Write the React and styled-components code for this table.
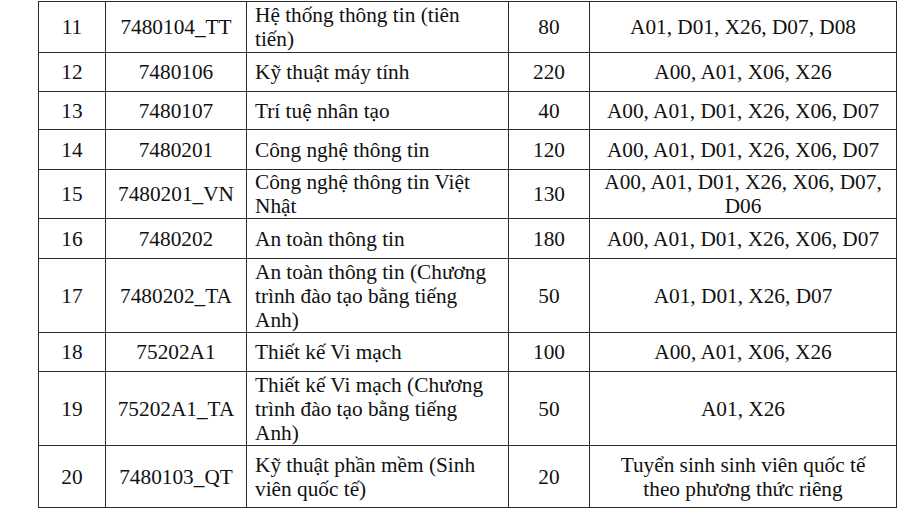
import React from 'react';
import styled, { createGlobalStyle } from 'styled-components';

const GlobalStyle = createGlobalStyle`
  html, body {
    margin: 0;
    padding: 0;
    background: #fff;
  }
`;

const Page = styled.div`
  padding: 1px 0 0 38px;
  background: #fff;
`;

const Table = styled.table`
  border-collapse: collapse;
  table-layout: fixed;
  width: 858px;
  font-family: 'Liberation Serif', 'Times New Roman', 'DejaVu Serif', serif;
  font-size: 21.3px;
  color: #111;
`;

const Col = styled.col`
  width: ${(p) => p.$w}px;
`;

const Row = styled.tr`
  height: ${(p) => p.$h}px;
`;

const Cell = styled.td`
  border: 1px solid #2b2b2b;
  padding: 0 8px;
  vertical-align: middle;
  text-align: ${(p) => (p.$left ? 'left' : 'center')};
  line-height: 24px;
  white-space: nowrap;
  overflow: hidden;
`;

const widths = [67, 141, 262, 81, 307];

const rows = [
  { no: 11, code: '7480104_TT', name: ['Hệ thống thông tin (tiên', 'tiến)'], qty: 80, combo: ['A01, D01, X26, D07, D08'], h: 51 },
  { no: 12, code: '7480106', name: ['Kỹ thuật máy tính'], qty: 220, combo: ['A00, A01, X06, X26'], h: 39 },
  { no: 13, code: '7480107', name: ['Trí tuệ nhân tạo'], qty: 40, combo: ['A00, A01, D01, X26, X06, D07'], h: 38 },
  { no: 14, code: '7480201', name: ['Công nghệ thông tin'], qty: 120, combo: ['A00, A01, D01, X26, X06, D07'], h: 40 },
  { no: 15, code: '7480201_VN', name: ['Công nghệ thông tin Việt', 'Nhật'], qty: 130, combo: ['A00, A01, D01, X26, X06, D07,', 'D06'], h: 49 },
  { no: 16, code: '7480202', name: ['An toàn thông tin'], qty: 180, combo: ['A00, A01, D01, X26, X06, D07'], h: 40 },
  { no: 17, code: '7480202_TA', name: ['An toàn thông tin (Chương', 'trình đào tạo bằng tiếng', 'Anh)'], qty: 50, combo: ['A01, D01, X26, D07'], h: 74 },
  { no: 18, code: '75202A1', name: ['Thiết kế Vi mạch'], qty: 100, combo: ['A00, A01, X06, X26'], h: 39 },
  { no: 19, code: '75202A1_TA', name: ['Thiết kế Vi mạch (Chương', 'trình đào tạo bằng tiếng', 'Anh)'], qty: 50, combo: ['A01, X26'], h: 74 },
  { no: 20, code: '7480103_QT', name: ['Kỹ thuật phần mềm (Sinh', 'viên quốc tế)'], qty: 20, combo: ['Tuyển sinh sinh viên quốc tế', 'theo phương thức riêng'], h: 62 },
];

const Lines = ({ items }) =>
  items.map((t, i) => (
    <React.Fragment key={i}>
      {i > 0 && <br />}
      {t}
    </React.Fragment>
  ));

export default function App() {
  return (
    <>
      <GlobalStyle />
      <Page>
        <Table>
          <colgroup>
            {widths.map((w, i) => (
              <Col key={i} $w={w} />
            ))}
          </colgroup>
          <tbody>
            {rows.map((r) => (
              <Row key={r.no} $h={r.h}>
                <Cell>{r.no}</Cell>
                <Cell>{r.code}</Cell>
                <Cell $left>
                  <Lines items={r.name} />
                </Cell>
                <Cell>{r.qty}</Cell>
                <Cell>
                  <Lines items={r.combo} />
                </Cell>
              </Row>
            ))}
          </tbody>
        </Table>
      </Page>
    </>
  );
}
